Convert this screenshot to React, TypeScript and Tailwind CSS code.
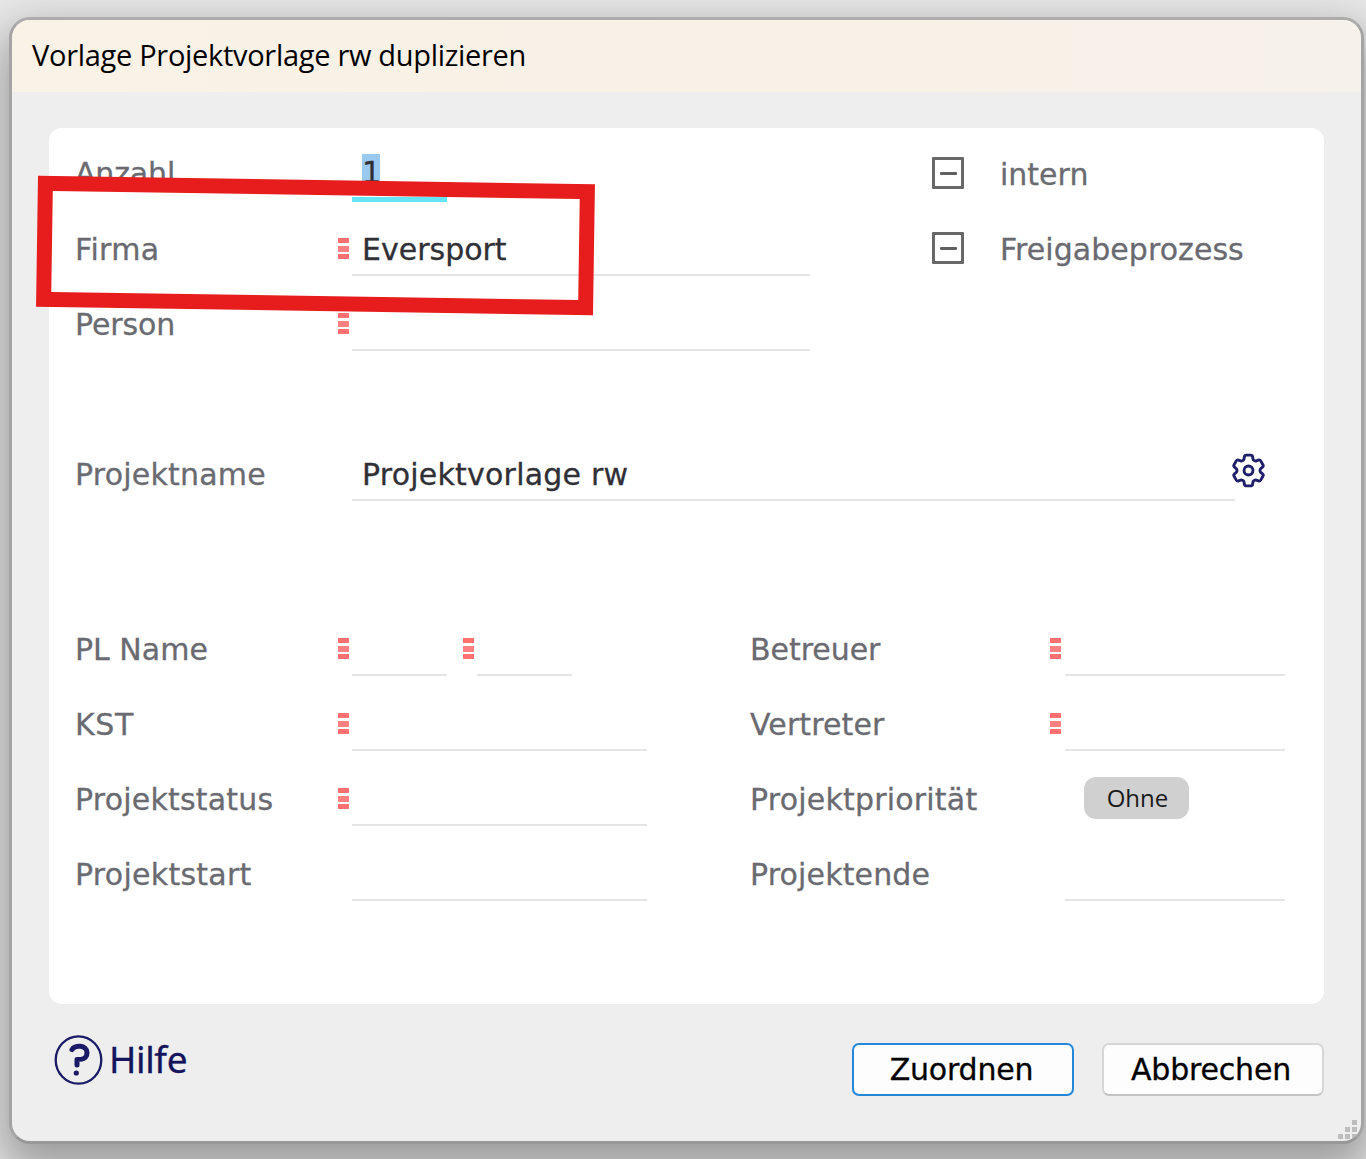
function Marker({ show = true, className = "" }: { show?: boolean; className?: string }) {
  return (
    <span className={`mt-[26px] flex h-[21px] w-[11px] shrink-0 flex-col justify-between ${className}`}>
      {show && (
        <>
          <span className="h-[5px] bg-[#ff7070]" />
          <span className="h-[6px] bg-[#ff8080]" />
          <span className="h-[5px] bg-[#ff7070]" />
        </>
      )}
    </span>
  );
}

function Label({ text, className }: { text: string; className: string }) {
  return <span className={`shrink-0 whitespace-nowrap text-[#6a6a71] ${className}`}>{text}</span>;
}

function Field({ text = "", className }: { text?: string; className: string }) {
  return (
    <span className={`ml-[3px] h-[64px] shrink-0 border-b-2 border-[#e5e5e5] pl-[10px] whitespace-pre text-[#303036] ${className}`}>
      {text}
    </span>
  );
}

function Check() {
  return (
    <span className="mt-[20px] flex h-[32px] w-[32px] shrink-0 items-center justify-center rounded-[1px] border-[3px] border-[#686868]">
      <span className="h-[3px] w-[17px] rounded-[1px] bg-[#606060]" />
    </span>
  );
}

function Gear() {
  return (
    <svg viewBox="0 0 24 24" className="mt-[12.5px] -ml-[7.5px] h-[41px] w-[41px] shrink-0" fill="none" stroke="#1f1f6b" strokeWidth="1.7" strokeLinejoin="round">
      <path d="M9.594 3.94c.09-.542.56-.94 1.11-.94h2.593c.55 0 1.02.398 1.11.94l.213 1.281c.063.374.313.686.645.87.074.04.147.083.22.127.325.196.72.257 1.075.124l1.217-.456a1.125 1.125 0 0 1 1.37.49l1.296 2.247a1.125 1.125 0 0 1-.26 1.431l-1.003.827c-.293.241-.438.613-.43.992a7.723 7.723 0 0 1 0 .255c-.008.378.137.75.43.991l1.004.827c.424.35.534.955.26 1.43l-1.298 2.247a1.125 1.125 0 0 1-1.369.491l-1.217-.456c-.355-.133-.75-.072-1.076.124a6.47 6.47 0 0 1-.22.128c-.331.183-.581.495-.644.869l-.213 1.281c-.09.543-.56.94-1.11.94h-2.594c-.55 0-1.019-.398-1.11-.94l-.213-1.281c-.062-.374-.312-.686-.644-.87a6.52 6.52 0 0 1-.22-.127c-.325-.196-.72-.257-1.076-.124l-1.217.456a1.125 1.125 0 0 1-1.369-.49l-1.297-2.247a1.125 1.125 0 0 1 .26-1.431l1.004-.827c.292-.24.437-.613.43-.991a6.932 6.932 0 0 1 0-.255c.007-.38-.138-.751-.43-.992l-1.004-.827a1.125 1.125 0 0 1-.26-1.43l1.297-2.247a1.125 1.125 0 0 1 1.37-.491l1.216.456c.356.133.751.072 1.076-.124.072-.044.146-.086.22-.128.332-.183.582-.495.644-.869l.214-1.28Z" />
      <circle cx="12" cy="12" r="2.6" />
    </svg>
  );
}

function HelpIcon() {
  return (
    <svg viewBox="0 0 50 52" className="h-[52px] w-[50px]" fill="none" stroke="#1a1a66">
      <ellipse cx="25.5" cy="26" rx="22.8" ry="23.6" strokeWidth="2.3" />
      <path d="M19 15.6C21.5 10.8 34 10.6 34 18.6C34 24.6 30 25.6 24 25.6V31" strokeWidth="5" strokeLinejoin="round" strokeLinecap="round" />
      <circle cx="23.3" cy="39" r="2.6" fill="#1a1a66" stroke="none" />
    </svg>
  );
}

export default function App() {
  return (
    <div className="relative h-[1159px] w-[1366px] overflow-hidden bg-[#e8e8e8] pt-[17px] pl-[9px] font-['DejaVu_Sans',sans-serif]">
      <div className="relative flex h-[1127px] w-[1355px] flex-col overflow-hidden rounded-[21px] border-[3px] border-x-[#a4a4a4] border-t-[#acacac] border-b-[#989898] bg-[#eeeeee] shadow-[0_20px_46px_8px_rgba(0,0,0,0.33)]">
        <header className="h-[72px] shrink-0 bg-linear-to-r from-[#f9f2e6] via-[#f9f1e7] to-[#f6f1ea] pl-[20px] font-['Open_Sans',sans-serif] text-[29px] leading-[70px] tracking-[-0.3px] text-black">
          Vorlage Projektvorlage rw duplizieren
        </header>
        <main className="mt-[36px] ml-[37px] h-[876px] w-[1275px] shrink-0 rounded-[13px] bg-white pt-[9px] pl-[26px] text-[30px] leading-[75px] [-webkit-text-stroke:0.3px]">
          <div className="flex h-[75px]">
            <Label text="Anzahl" className="w-[263px] leading-[73px] tracking-[-0.15px]" />
            <Marker show={false} />
            <span className="ml-[3px] h-[65px] w-[95px] shrink-0 border-b-[5px] border-[#66e5f8] pl-[10px] text-[#303036]">
              <span className="mt-[17px] block h-[40px] w-[18px] bg-[#99c9ef] leading-[38px]">1</span>
            </span>
            <span className="w-[485px] shrink-0" />
            <Check />
            <Label text="intern" className="ml-[36px]" />
          </div>
          <div className="flex h-[75px]">
            <Label text="Firma" className="w-[263px] tracking-[0.35px]" />
            <Marker />
            <Field text="Eversport" className="w-[458px]" />
            <span className="w-[122px] shrink-0" />
            <Check />
            <Label text="Freigabeprozess" className="ml-[36px] tracking-[0.05px]" />
          </div>
          <div className="flex h-[75px]">
            <Label text="Person" className="w-[263px] tracking-[-0.1px]" />
            <Marker />
            <Field className="w-[458px]" />
          </div>
          <div className="mt-[75px] flex h-[75px]">
            <Label text="Projektname" className="w-[263px] tracking-[0.2px]" />
            <Marker show={false} />
            <Field text="Projektvorlage rw" className="w-[883px] tracking-[0.22px]" />
            <Gear />
          </div>
          <div className="mt-[100px] flex h-[75px]">
            <Label text="PL Name" className="w-[263px]" />
            <Marker />
            <Field className="w-[95px]" />
            <Marker className="ml-[16px]" />
            <Field className="w-[95px]" />
            <Label text="Betreuer" className="ml-[178px] w-[300px] tracking-[-0.05px]" />
            <Marker />
            <Field className="ml-[4px]! w-[220px]" />
          </div>
          <div className="flex h-[75px]">
            <Label text="KST" className="w-[263px] tracking-[0.6px]" />
            <Marker />
            <Field className="w-[295px]" />
            <Label text="Vertreter" className="ml-[103px] w-[300px] tracking-[0.12px]" />
            <Marker />
            <Field className="ml-[4px]! w-[220px]" />
          </div>
          <div className="flex h-[75px]">
            <Label text="Projektstatus" className="w-[263px] tracking-[0.2px]" />
            <Marker />
            <Field className="w-[295px]" />
            <Label text="Projektpriorität" className="ml-[103px] w-[334px] tracking-[0.2px]" />
            <span className="mt-[15px] h-[42px] w-[105px] rounded-[12px] bg-[#d0d0d0] pl-[2px] text-center font-['Open_Sans',sans-serif] text-[24px] leading-[42px] text-[#1a1a1a] [-webkit-text-stroke:0px]">
              Ohne
            </span>
          </div>
          <div className="flex h-[75px]">
            <Label text="Projektstart" className="w-[263px] tracking-[0.27px]" />
            <Marker show={false} />
            <Field className="w-[295px]" />
            <Label text="Projektende" className="ml-[103px] w-[300px] tracking-[0.15px]" />
            <Marker show={false} />
            <Field className="ml-[4px]! w-[220px]" />
          </div>
        </main>
        <footer className="ml-[41px] flex text-[30px] text-black">
          <div className="mt-[30px] flex h-[52px] w-[799px] shrink-0">
            <HelpIcon />
            <span className="ml-[6px] font-['Noto_Sans',sans-serif] text-[37px] leading-[50px] tracking-[-0.4px] text-[#14145c] [-webkit-text-stroke:0.3px]">Hilfe</span>
          </div>
          <button className="mt-[39px] h-[53px] w-[222px] shrink-0 rounded-[7px] border-2 border-[#2487d8] bg-[#fdfdfd] pr-[3px] text-center leading-[49px] tracking-[-0.2px] [-webkit-text-stroke:0.3px]">
            Zuordnen
          </button>
          <button className="mt-[39px] ml-[28px] h-[53px] w-[222px] shrink-0 rounded-[7px] border-2 border-[#d6d6d6] border-b-[#c4c4c4] bg-[#fdfdfd] pr-[4px] text-center leading-[49px] tracking-[-0.2px] [-webkit-text-stroke:0.3px]">
            Abbrechen
          </button>
        </footer>
        <div className="absolute right-[4px] bottom-[2px] grid grid-cols-3 gap-[2px]">
          {[0, 0, 1, 0, 1, 1, 1, 1, 1].map((on, i) => (
            <span key={i} className={on ? "h-[5px] w-[5px] bg-[#bdbdbd]" : "h-[5px] w-[5px]"} />
          ))}
        </div>
      </div>
      <div className="absolute top-[179.5px] left-[37px] h-[131px] w-[557px] rotate-[0.86deg] border-[15px] border-[#e71c1c]" />
    </div>
  );
}
